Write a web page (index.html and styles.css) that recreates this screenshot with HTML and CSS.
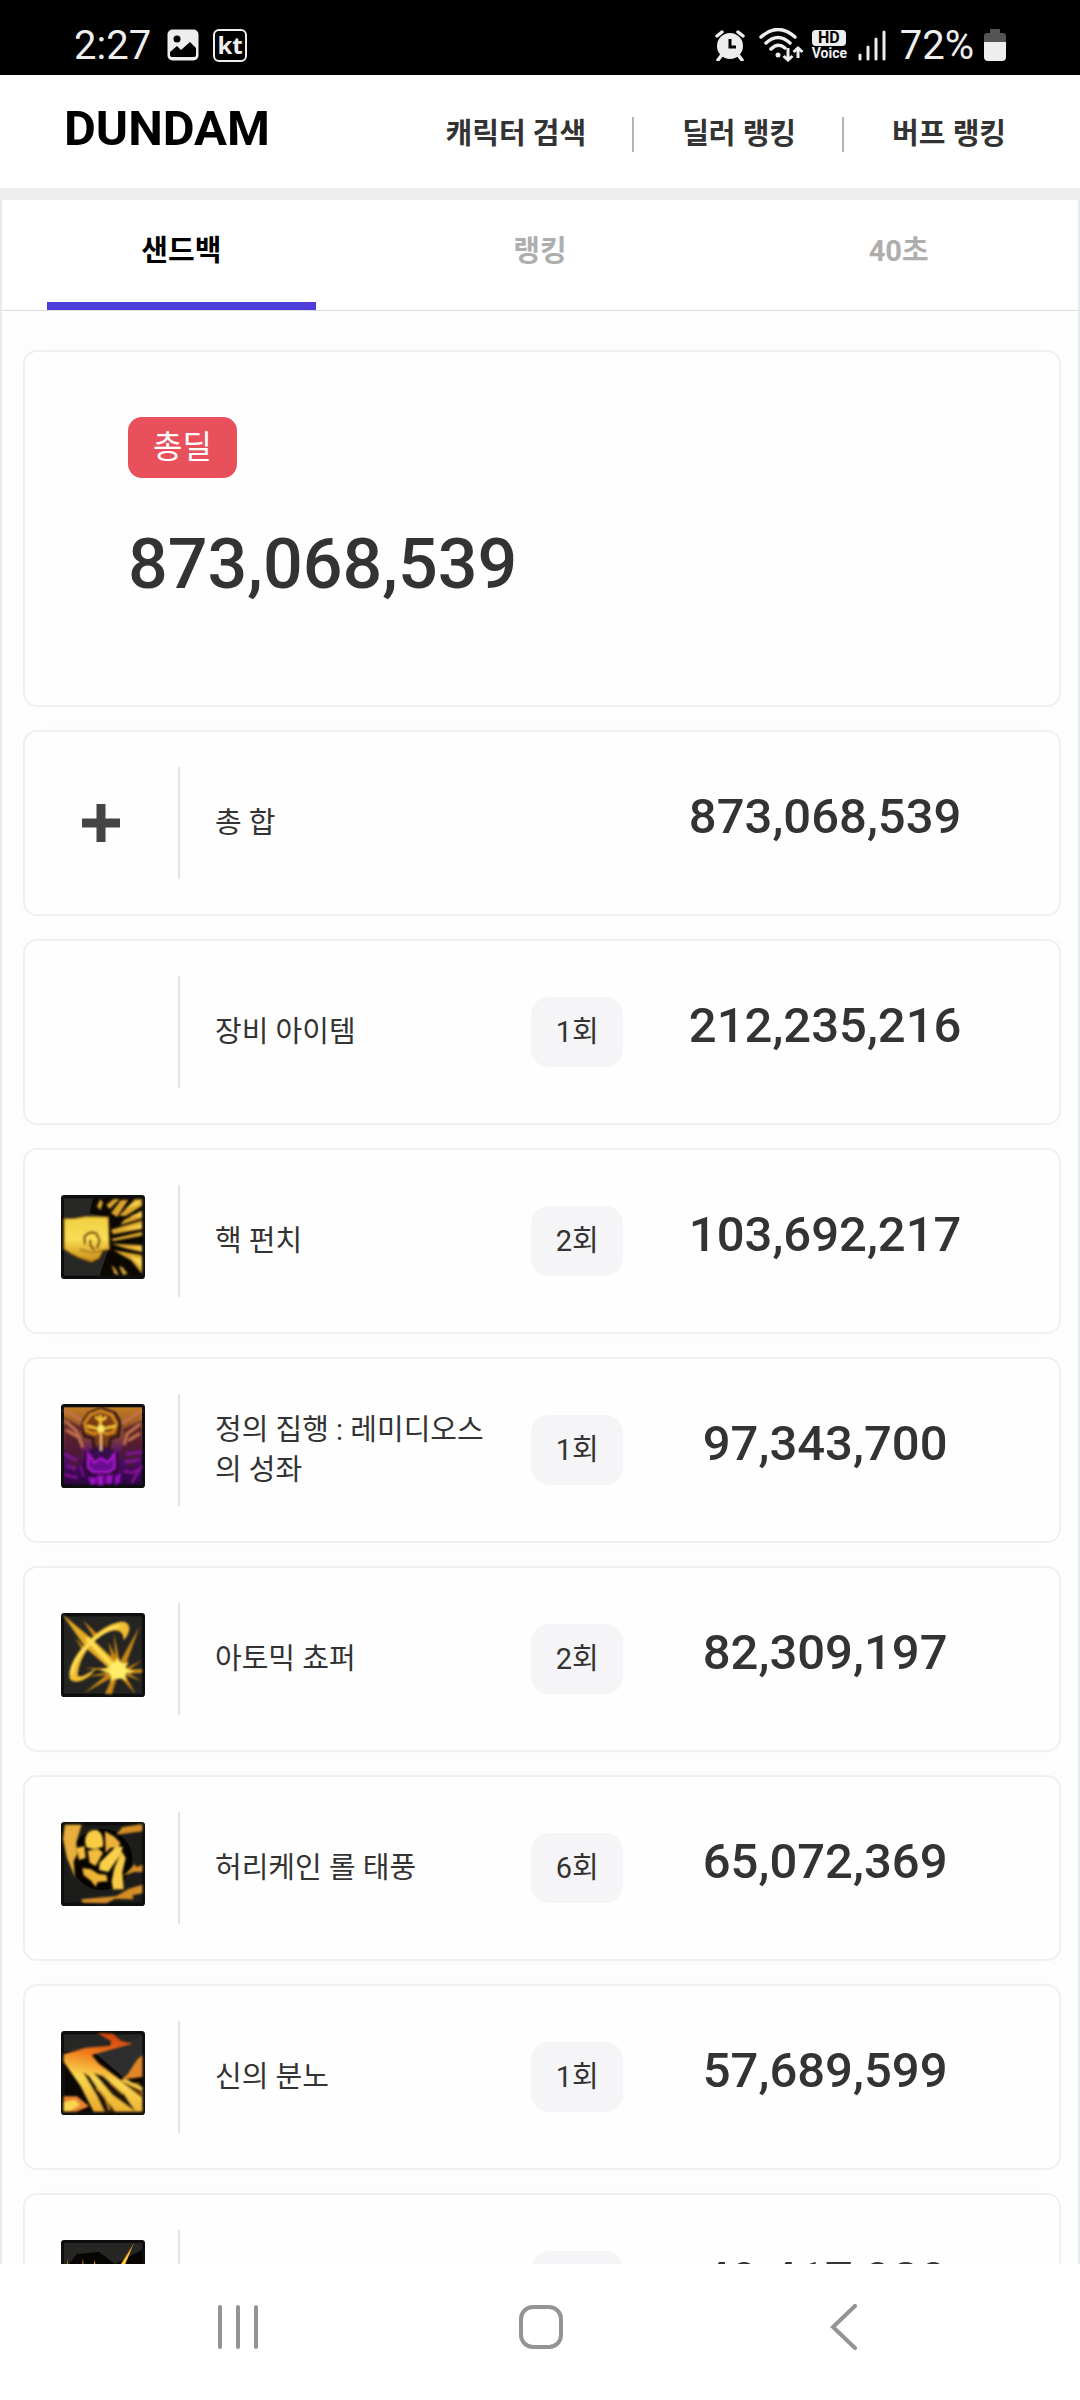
FILE: index.html
```html
<!doctype html>
<html lang="ko">
<head>
  <meta charset="UTF-8">
  <meta name="viewport" content="width=device-width, initial-scale=1.0">
  <title>DUNDAM</title>
  <link rel="stylesheet" href="styles.css">
</head>
<body>

  <div class="statusbar">
    <div class="status-left">
      <span class="status-text">2:27</span>
      <svg class="photo" width="32" height="32" viewBox="0 0 32 32">
        <rect width="31" height="31" x="0.5" y="0.5" rx="5" fill="#eee"/>
        <circle cx="10" cy="10" r="3.5" fill="#000"/>
        <path d="M3 23l7-6 4 4 9-8 6 6v7a2 2 0 0 1-2 2H5a2 2 0 0 1-2-2z" fill="#000"/>
      </svg>
      <span class="carrier">kt</span>
    </div>
    <div class="status-right">
      <svg width="30" height="32" viewBox="0 0 30 32">
        <circle cx="15" cy="17" r="13" fill="#eee"/>
        <path d="M2 7l5-4M28 7l-5-4M6 27l-3 4M24 27l3 4" stroke="#eee" stroke-width="3.5" stroke-linecap="round"/>
        <path d="M15 10v8h6" fill="none" stroke="#000" stroke-width="3"/>
      </svg>
      <svg class="wifi" width="45" height="34" viewBox="0 0 45 34">
        <path d="M2 9Q19-6 36 9M7 15Q19 4 31 15M12 21Q19 14 26 20" fill="none" stroke="#eee" stroke-width="3.5" stroke-linecap="round"/>
        <circle cx="19" cy="27" r="2.5" fill="#eee"/>
        <path d="M29 20v12M24.500 28l4.500 4 4.500-4M39 30V20M34.500 24l4.500-4 4.500 4" fill="none" stroke="#eee" stroke-width="3"/>
      </svg>
      <span class="hdvoice"><b>HD</b><i>Voice</i></span>
      <svg width="28" height="32" viewBox="0 0 28 32">
        <path d="M2 26v4M10 18v12M18 10v20M26 3v27" stroke="#eee" stroke-width="3" stroke-linecap="round"/>
      </svg>
      <span class="status-text percent">72%</span>
      <svg width="22" height="34" viewBox="0 0 22 34">
        <path d="M6 1h10v4h3a3 3 0 0 1 3 3v7H0V8a3 3 0 0 1 3-3h3z" fill="#555"/>
        <path d="M0 14h22v15a4 4 0 0 1-4 4H4a4 4 0 0 1-4-4z" fill="#eee"/>
      </svg>
    </div>
  </div>

  <div class="page">
    <header class="topnav">
      <a class="logo" href="index.html">DUNDAM</a>
      <nav class="menu">
        <a href="search.html">캐릭터 검색</a>
        <a href="dealer.html">딜러 랭킹</a>
        <a href="buff.html">버프 랭킹</a>
      </nav>
    </header>

    <main class="panel">
      <div class="tabs">
        <button type="button" class="tab active">샌드백</button>
        <button type="button" class="tab">랭킹</button>
        <button type="button" class="tab">40초</button>
      </div>

      <div class="cards">
        <section class="card summary">
          <span class="label">총딜</span>
          <p class="total">873,068,539</p>
        </section>

        <ul class="skills">
          <li class="card skill">
            <button type="button" class="plus" aria-label="펼치기">
              <svg width="38" height="38" viewBox="0 0 38 38"><path d="M19 0v38M0 19h38" stroke="#444" stroke-width="9"/></svg>
            </button>
            <span class="name">총 합</span>
            <span class="damage">873,068,539</span>
          </li>

          <li class="card skill">
            <span class="name">장비 아이템</span>
            <span class="count">1회</span>
            <span class="damage">212,235,216</span>
          </li>

          <li class="card skill">
            <svg class="icon" viewBox="34 42 252 252">
              <defs>
                <linearGradient id="gold" x1="0" y1="0" x2="0" y2="1">
                  <stop offset="0" stop-color="#f0cf40"/>
                  <stop offset="0.5" stop-color="#fbdd55"/>
                  <stop offset="1" stop-color="#c98a16"/>
                </linearGradient>
                <linearGradient id="holy" x1="0" y1="0" x2="0" y2="1">
                  <stop offset="0" stop-color="#c07c22"/>
                  <stop offset="0.35" stop-color="#8a4a2c"/>
                  <stop offset="0.6" stop-color="#53106b"/>
                  <stop offset="1" stop-color="#2c0540"/>
                </linearGradient>
                <linearGradient id="fire" x1="0.6" y1="0" x2="0.4" y2="1">
                  <stop offset="0" stop-color="#d2400c"/>
                  <stop offset="0.3" stop-color="#f07a1c"/>
                  <stop offset="0.6" stop-color="#f9d850"/>
                  <stop offset="1" stop-color="#eaa62a"/>
                </linearGradient>
                <filter id="soft"><feGaussianBlur stdDeviation="3"/></filter>
              </defs>
              <rect x="34" y="42" width="252" height="252" rx="10" fill="#0e0e0e"/>
              <rect x="43" y="52" width="234" height="232" fill="#272725"/>
              <path d="M130 52H277V284H150L178 200V110L120 96z" fill="#0b0803"/>
              <g filter="url(#soft)">
                <path d="M43 113L75 112 110 106 176 108 179 205 160 208 148 232 125 243 88 230 68 220 43 204z" fill="url(#gold)" stroke="#8d5b0a" stroke-width="4"/>
                <path d="M106 190L104 168Q120 148 140 158L150 178 142 202M122 176V192L134 208" fill="none" stroke="#7a520e" stroke-width="7"/>
                <path d="M90 205L130 216 158 208" fill="none" stroke="#a87216" stroke-width="5"/>
                <path d="M142 76L152 55 160 64 152 88zM170 72L192 54 210 54 180 84zM184 96L213 58 236 56 202 108zM208 104L255 55H277V75L228 105zM222 118L277 88V112L212 132zM184 146L277 118V145L190 160zM184 174L277 152V164L192 180zM186 188L277 192V214L226 202zM192 208L277 222V278L244 238zM186 252L194 278 208 282 196 262zM208 256L220 282 234 278 218 258z" fill="#d9a32b"/>
                <path d="M225 84L270 56V70zM240 104L277 96V106zM210 146L277 130V140zM230 196L277 200V208zM240 224L277 234V260z" fill="#f7d551"/>
              </g>
            </svg>
            <span class="name">핵 펀치</span>
            <span class="count">2회</span>
            <span class="damage">103,692,217</span>
          </li>

          <li class="card skill">
            <svg class="icon" viewBox="34 40 252 252">
              <rect x="34" y="40" width="252" height="252" rx="10" fill="#0e0e0e"/>
              <rect x="43" y="50" width="234" height="232" fill="url(#holy)"/>
              <g filter="url(#soft)">
                <path d="M43 80L96 110 88 150 102 196 76 240 43 190zM277 90L220 114 226 150 208 196 244 232 277 190z" fill="#4c1a2a" opacity="0.8"/>
                <path d="M44 58L80 78 100 96M50 118L92 142M46 90L80 120 100 170M276 60L240 84 214 98M272 100L232 130 224 162M270 128L236 150" fill="none" stroke="#c77250" stroke-width="8"/>
                <path d="M118 68L154 52 196 68 212 96 206 136 184 142 174 178 198 186 202 228 188 246H122L106 228 112 186 136 178 130 142 104 136 98 96z" fill="#7a3d14" stroke="#240b12" stroke-width="8"/>
                <path d="M112 188L136 178 154 150 174 178 196 188 202 228 188 244H122L108 228z" fill="#38084f"/>
                <path d="M122 72L152 60 186 72 200 98 192 124 170 130 152 120 134 130 110 120 104 98z" fill="none" stroke="#d98a1f" stroke-width="8"/>
                <path d="M112 106L152 116 198 106M138 78Q152 98 170 78M152 72V132" fill="none" stroke="#ffc936" stroke-width="7"/>
                <circle cx="154" cy="114" r="10" fill="#ffe96b"/>
                <path d="M154 130V180" stroke="#efb66a" stroke-width="6"/>
                <path d="M116 190L134 216 154 204 176 216 194 190V232L176 244H132L116 230z" fill="#670a91" stroke="#a516c8" stroke-width="7"/>
                <path d="M92 226L102 258M118 262L124 280 138 278V262zM144 256H160V282H146zM170 256L188 254 184 278H170zM198 258L212 250 208 274 198 280z" fill="#a413cc" stroke="#8410a8" stroke-width="5"/>
                <path d="M44 190L82 210M50 224L78 236M44 252L84 262M230 190L276 184M222 240L250 246 264 236M246 276L262 250 276 226M224 214L270 208" fill="none" stroke="#7b1290" stroke-width="9"/>
              </g>
            </svg>
            <span class="name">정의 집행 : 레미디오스의 성좌</span>
            <span class="count">1회</span>
            <span class="damage">97,343,700</span>
          </li>

          <li class="card skill">
            <svg class="icon" viewBox="34 40 252 252">
              <rect x="34" y="40" width="252" height="252" rx="10" fill="#0e0e0e"/>
              <rect x="43" y="50" width="234" height="232" fill="#242422"/>
              <g filter="url(#soft)">
                <path d="M38 44L132 122 214 200 196 222 108 144z" fill="#e6aa24"/>
                <path d="M100 62L146 106 134 116zM76 114L110 150 98 152zM176 126L206 188 186 176zM192 100L210 184H198zM270 80L228 196 200 206zM278 182L228 206 230 216zM278 208L222 210V222L276 220zM104 206L192 204V216zM102 232L192 214 200 224zM104 280L182 216 204 224zM166 282L192 222H206L186 284zM204 224L222 218 258 284zM214 222L230 216 276 244z" fill="#c98715"/>
                <path d="M62 240C42 180 158 62 222 66C252 74 236 108 222 122C222 98 208 84 174 98C128 116 88 174 84 228C96 236 124 216 140 204C118 238 82 256 62 240z" fill="#f2bd2f"/>
                <path d="M66 226C66 178 142 92 210 78" fill="none" stroke="#ffdf58" stroke-width="9"/>
                <path d="M112 116L204 214" stroke="#ffdf55" stroke-width="13"/>
                <path d="M204 174L216 194 238 188 226 206 256 216 226 222 230 244 204 230 182 248 186 222 152 212 184 200z" fill="#ffe24f"/>
                <circle cx="204" cy="212" r="26" fill="#ffed6a"/>
              </g>
            </svg>
            <span class="name">아토믹 쵸퍼</span>
            <span class="count">2회</span>
            <span class="damage">82,309,197</span>
          </li>

          <li class="card skill">
            <svg class="icon" viewBox="34 38 252 252">
              <rect x="34" y="38" width="252" height="252" rx="10" fill="#0e0e0e"/>
              <rect x="43" y="48" width="234" height="232" fill="#1c1c1a"/>
              <circle cx="156" cy="150" r="92" fill="#060502"/>
              <g filter="url(#soft)">
                <path d="M46 46H96L80 98 82 136 72 156 76 204 52 146 40 88z" fill="#e9ae3b"/>
                <path d="M200 76L218 54 278 44V66L234 72zM222 200L256 164 260 174 278 166V188L252 188zM94 270L200 260 238 238 278 226V252L248 258 252 270 196 268 170 282 100 280z" fill="#d48d27"/>
                <path d="M106 98Q108 58 142 62Q164 74 160 112L132 120 110 114z" fill="#f8cd45"/>
                <path d="M166 66L194 82 212 100 208 112 182 116 168 130z" fill="#edb23b"/>
                <path d="M80 116L104 110 108 146 88 152zM114 124L146 118 160 130 138 170 120 160z" fill="#f2bc3c"/>
                <path d="M150 160L198 112 220 112 212 136 176 188 148 182z" fill="#fad04c"/>
                <path d="M216 126L228 146 218 188 222 240H190L186 216 194 176z" fill="#f7ca46"/>
                <path d="M98 176L124 180 146 194 170 196 174 216 144 218 138 232 124 214 102 198z" fill="#edb436"/>
              </g>
            </svg>
            <span class="name">허리케인 롤 태풍</span>
            <span class="count">6회</span>
            <span class="damage">65,072,369</span>
          </li>

          <li class="card skill">
            <svg class="icon" viewBox="34 36 252 252">
              <rect x="34" y="36" width="252" height="252" rx="10" fill="#0e0e0e"/>
              <rect x="43" y="46" width="234" height="232" fill="#262625"/>
              <path d="M44 98L180 84 224 178 278 150V278H44z" fill="#0b0704"/>
              <path d="M134 100L226 72 278 52V106L224 178z" fill="#2d2d2d"/>
              <g filter="url(#soft)">
                <path d="M142 42L190 44 214 66 250 74 212 84 126 108 148 134 214 184 228 180 278 204V278H132L92 200 42 128V106L108 86 182 80 184 66z" fill="url(#fire)"/>
                <path d="M278 108L262 122 234 166 214 182 278 174z" fill="#e38525"/>
                <path d="M42 232L82 232 118 262 80 278H42z" fill="#ed8430"/>
                <path d="M42 250L76 242 90 258 60 276H42z" fill="#f9d850"/>
                <path d="M100 160L120 172 158 228 198 278H164L142 232zM132 162L160 170 224 226 258 278 188 228z" fill="#241307"/>
                <path d="M210 184L276 214V236zM236 190L268 190 276 198z" fill="#6e390c"/>
                <path d="M140 206L166 230 180 272M182 190L220 224" stroke="#e6a52b" stroke-width="4" fill="none"/>
              </g>
            </svg>
            <span class="name">신의 분노</span>
            <span class="count">1회</span>
            <span class="damage">57,689,599</span>
          </li>

          <li class="card skill">
            <svg class="icon" viewBox="0 0 84 84">
              <rect width="84" height="84" rx="3" fill="#0e0e0e"/>
              <rect x="3" y="3" width="78" height="78" fill="#262624"/>
              <path d="M3 30L16 14 38 12 54 24 81 10V81H3z" fill="#070502"/>
              <path d="M73 3L62 30 48 60 36 81 42 50 50 26 56 30zM6 18L10 40 8 60zM22 18L24 50 20 34zM34 20L36 48 30 32z" fill="#d6921d"/>
              <path d="M70 10L58 36 44 60 54 34z" fill="#ffd64a"/>
            </svg>
            <span class="name"></span>
            <span class="count">1회</span>
            <span class="damage">49,417,989</span>
          </li>
        </ul>
      </div>
    </main>
  </div>

  <div class="navbar">
    <button type="button" aria-label="최근 앱">
      <svg width="46" height="46" viewBox="0 0 46 46"><path d="M5 3v40M23 3v40M41 3v40" stroke="#949494" stroke-width="4" stroke-linecap="round"/></svg>
    </button>
    <button type="button" aria-label="홈">
      <svg width="46" height="46" viewBox="0 0 46 46"><rect x="3" y="3" width="40" height="40" rx="12" fill="none" stroke="#949494" stroke-width="4"/></svg>
    </button>
    <button type="button" aria-label="뒤로">
      <svg width="46" height="46" viewBox="0 0 46 46"><path d="M34 2L12 23l22 21" fill="none" stroke="#949494" stroke-width="4" stroke-linecap="round"/></svg>
    </button>
  </div>

</body>
</html>
```
FILE: styles.css
```css
* {
  box-sizing: border-box;
}

body {
  margin: 0;
  height: 100vh;
  display: flex;
  flex-direction: column;
  font-family: Roboto, "Noto Sans CJK KR", sans-serif;
  font-size: 29px;
  color: #333;
  background-color: #fefefe;
}

button {
  padding: 0;
  border: none;
  background: none;
  font: inherit;
  color: inherit;
  cursor: pointer;
}

a {
  color: inherit;
  text-decoration: none;
}

/* Status bar */
.statusbar {
  flex: none;
  display: flex;
  justify-content: space-between;
  height: 75px;
  padding: 16px 74px 0;
  background-color: #000;
  color: #eee;
}

.status-left, .status-right {
  display: flex;
  align-items: center;
  height: 59px;
  padding-bottom: 1px;
}

.status-text {
  font-size: 40px;
}

.photo {
  margin: 0 14px 0 16px;
}

.carrier {
  width: 34px;
  height: 33px;
  border: 2px solid #eee;
  border-radius: 6px;
  font-family: "Noto Sans", sans-serif;
  font-size: 24px;
  font-weight: bold;
  line-height: 27px;
  text-align: center;
}

.wifi {
  margin: 0 8px 0 14px;
}

.hdvoice {
  width: 34px;
  margin-right: 12px;
  text-align: center;
}

.hdvoice b, .hdvoice i {
  display: block;
  font-size: 14px;
  font-style: normal;
  font-weight: bold;
  line-height: 14px;
}

.hdvoice b {
  font-size: 16px;
  line-height: 16px;
  border-radius: 4px;
  background-color: #eee;
  color: #000;
}

.percent {
  margin: 0 10px 0 14px;
}

/* Page */
.page {
  flex: 1;
  overflow-y: auto;
  scrollbar-width: none;
}

.topnav {
  display: flex;
  align-items: center;
  justify-content: space-between;
  height: 125px;
  padding: 0 74px 0 64px;
  border-bottom: 12px solid #eee;
  background-color: #fff;
}

.logo {
  padding-bottom: 6px;
  color: #000;
  font-size: 49px;
  font-weight: bold;
  line-height: 70px;
}

.menu {
  display: flex;
  align-items: center;
  padding-top: 6px;
  font-weight: bold;
}

.menu a {
  line-height: 35px;
}

.menu a + a {
  margin-left: 46px;
  padding-left: 48px;
  border-left: 2px solid #b3b3b6;
}

.panel {
  border: solid #e6eaee;
  border-width: 0 2px;
}

.tabs {
  display: flex;
  justify-content: space-around;
  height: 111px;
  border-bottom: 1px solid #dcdcde;
  background-color: #fff;
}

.tab {
  width: 25%;
  padding-bottom: 6px;
  border-bottom: 8px solid transparent;
  font-weight: bold;
  color: #aeaeae;
}

.tab.active {
  border-color: #4e3dd8;
  color: #000;
}

/* Cards */
.cards {
  padding: 39px 17px 23px 21px;
}

.card {
  border: 2px solid #f0f0f1;
  border-radius: 14px;
  background-color: #fefefe;
  box-shadow: 0 0 24px rgba(0, 0, 0, 0.02);
}

.summary {
  min-height: 357px;
  margin-bottom: 23px;
  padding: 65px 103px;
}

.label {
  display: inline-block;
  width: 109px;
  border-radius: 14px;
  background-color: #e8505b;
  color: #fff;
  font-size: 32px;
  line-height: 61px;
  text-align: center;
}

.total {
  margin: 44px 0 0;
  font-size: 70px;
  font-weight: 500;
  line-height: 84px;
}

.skills {
  display: grid;
  gap: 23px;
  margin: 0;
  padding: 0;
  list-style: none;
}

.skill {
  display: grid;
  grid-template-columns: 153px 7fr 92px 8fr;
  align-items: center;
  height: 186px;
  padding-right: 32px;
}

.icon {
  width: 84px;
  height: 84px;
  margin: 0 0 8px 36px;
}

.plus {
  width: 38px;
  height: 38px;
  margin-left: 57px;
}

.plus svg {
  display: block;
}

.name {
  grid-column: 2;
  display: flex;
  align-items: center;
  height: 112px;
  padding: 0 30px 0 35px;
  border-left: 2px solid #e2e4ea;
  line-height: 40px;
}

.count {
  grid-column: 3;
  border-radius: 18px;
  background-color: #f5f5f8;
  line-height: 70px;
  text-align: center;
}

.damage {
  grid-column: 4;
  padding-bottom: 12px;
  font-size: 49px;
  font-weight: 500;
  line-height: 60px;
  text-align: center;
}

/* Bottom buttons */
.navbar {
  flex: none;
  display: flex;
  height: 136px;
  padding: 0 85px 4px 87px;
  background-color: #fff;
}

.navbar button {
  flex: 1;
}
```
